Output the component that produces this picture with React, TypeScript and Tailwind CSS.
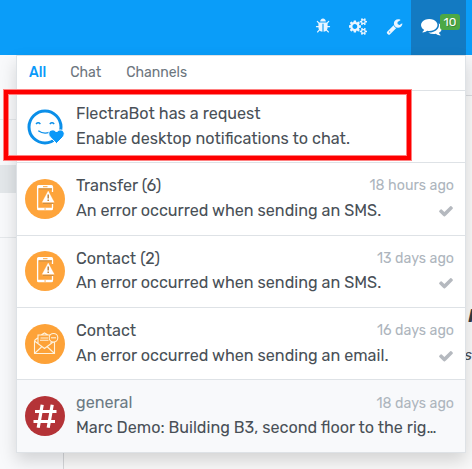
import type { ReactNode } from "react";

const gear =
  "v140q0 16-149 31-12 27-30 52 51 113 51 138 0 4-4 7-122 71-124 71-8 0-46-47t-52-68q-20 2-30 2t-30-2q-14 21-52 68t-46 47q-2 0-124-71-4-3-4-7 0-25 51-138-18-25-30-52-149-15-149-31v-140q0-16 149-31 13-29 30-52-51-113-51-138 0-4 4-7 4-2 35-20t59-34 30-16q8 0 46 46.500t52 67.500q20-2 30-2t30 2q51-71 92-112l6-2q4 0 124 70 4 3 4 7 0 25-51 138 17 23 30 52 149 15 149 31z";

const icons = {
  bug: "M1696 960q0 26-19 45t-45 19h-224q0 171-67 290l208 209q19 19 19 45t-19 45q-18 19-45 19t-45-19l-198-197q-5 5-15 13t-42 28.500-65 36.500-82 29-97 13v-896h-128v896q-51 0-101.500-13.500t-87-33-66-39-43.500-32.500l-15-14-183 207q-20 21-48 21-24 0-43-16-19-18-20.500-44.500t15.500-46.500l202-227q-58-114-58-274h-224q-26 0-45-19t-19-45 19-45 45-19h224v-294l-173-173q-19-19-19-45t19-45 45-19 45 19l173 173h844l173-173q19-19 45-19t45 19 19 45-19 45l-173 173v294h224q26 0 45 19t19 45zm-480-576h-640q0-133 93.500-226.500t226.500-93.500 226.500 93.500 93.500 226.500z",
  cogs:
    "M832 896q0-106-75-181t-181-75-181 75-75 181 75 181 181 75 181-75 75-181zm768 512q0-52-38-90t-90-38-90 38-38 90q0 53 37.500 90.500t90.500 37.500 90.500-37.500 37.500-90.500zm0-1024q0-52-38-90t-90-38-90 38-38 90q0 53 37.500 90.500t90.500 37.500 90.500-37.500 37.500-90.500zm-384 421v185q0 10-7 19.500t-16 10.500l-155 24q-11 35-32 76 34 48 90 115 7 11 7 20 0 12-7 19-23 30-82.500 89.500t-78.500 59.500q-11 0-21-7l-115-90q-37 19-77 31-11 108-23 155-7 24-30 24h-186q-11 0-20-7.500t-10-17.500l-23-153q-34-10-75-31l-118 89q-7 7-20 7-11 0-21-8-144-133-144-160 0-9 7-19 10-14 41-53t47-61q-23-44-35-82l-152-24q-10-1-17-9.500t-7-19.500v-185q0-10 7-19.500t16-10.500l155-24q11-35 32-76-34-48-90-115-7-11-7-20 0-12 7-20 22-30 82-89t79-59q11 0 21 7l115 90q34-18 77-32 11-108 23-154 7-24 30-24h186q11 0 20 7.500t10 17.500l23 153q34 10 75 31l118-89q8-7 20-7 11 0 21 8 144 133 144 160 0 8-7 19-12 16-42 54t-45 60q23 48 34 82l152 23q10 2 17 10.500t7 19.500zM1856 1338" +
    gear +
    "M1856 314" +
    gear,
  wrench: "M448 1472q0-26-19-45t-45-19-45 19-19 45 19 45 45 19 45-19 19-45zm644-420l-682 682q-37 37-90 37-52 0-91-37l-106-108q-38-36-38-90 0-53 38-91l681-681q39 98 114.500 173.500t173.500 114.500zm634-435q0 39-23 106-47 134-164.500 217.500t-258.500 83.500q-185 0-316.500-131.500t-131.500-316.500 131.500-316.500 316.500-131.500q58 0 121.500 16.500t107.500 46.500q16 11 16 28t-16 28l-293 169v224l193 107q5-3 79-48.500t135.500-81 70.500-35.500q15 0 23.500 10t8.500 25z",
  comments:
    "M1408 768q0 139-94 257t-256.500 186.500-353.500 68.500q-86 0-176-16-124 88-278 128-36 9-86 16h-3q-11 0-20.500-8t-11.500-21q-1-3-1-6.500t.5-6.500 2-6l2.500-5 3.500-5.500 4-5 4.500-5 4-4.500q5-6 23-25t26-29.500 22.500-29 25-38.500 20.500-44q-124-72-195-177t-71-224q0-139 94-257t256.500-186.500 353.500-68.500 353.500 68.500 256.500 186.500 94 257zm384 256q0 120-71 224.500t-195 176.500q10 24 20.500 44t25 38.500 22.500 29 26 29.500 23 25q1 1 4 4.500t4.500 5 4 5 3.500 5.500l2.500 5 2 6 .5 6.500-1 6.500q-3 14-13 22t-22 7q-50-7-86-16-154-40-278-128-90 16-176 16-271 0-472-132 58 4 88 4 161 0 309-45t264-129q125-92 192-212t67-254q0-77-23-152 129 71 204 178t75 230z",
  check: "M1671 566q0 40-28 68l-724 724-136 136q-28 28-68 28t-68-28l-136-136-362-362q-28-28-28-68t28-68l136-136q28-28 68-28t68 28l294 295 656-657q28-28 68-28t68 28l136 136q28 28 28 68z",
};

function Glyph({ name, className, wide = false }: { name: keyof typeof icons; className: string; wide?: boolean }) {
  return (
    <svg viewBox={wide ? "0 0 1920 1792" : "0 0 1792 1792"} className={"shrink-0 " + className} fill="currentColor">
      <path d={icons[name]} />
    </svg>
  );
}

function BotAvatar() {
  return (
    <svg viewBox="0 0 40 40" className="size-10" fill="none">
      <circle cx="20" cy="20" r="16" stroke="#0b8fe9" strokeWidth="3" />
      <path d="M11 17q2.200-2.400 4.400 0M24.800 17q2.200-2.400 4.400 0M13.300 23.800q5 3.600 11 1.600" stroke="#0b8fe9" strokeWidth="1.400" />
      <path d="M31.500 36.500 25.200 30c-4.500-5 2.300-10 6.300-5 4-5 10.500 0 6.500 5z" fill="#0b98f8" stroke="#fff" strokeWidth="1" />
    </svg>
  );
}

function SmsAvatar() {
  return (
    <svg viewBox="0 0 40 40" className="size-10" fill="none">
      <circle cx="20" cy="20" r="20" fill="#fea43b" />
      <path d="M12.600 8v21M27.500 8v5M27.500 25v4" stroke="#fff" strokeWidth="1.300" />
      <path d="M12 9.200V7.500Q12 6 13.500 6h13Q28 6 28 7.500v1.700zM12 28.800h16V30q0 1.300-1.500 1.300h-13Q12 31.300 12 30z" fill="#fff" />
      <path d="M18 7.700h4.500M19.300 30h1.600" stroke="#fea43b" strokeWidth="1" />
      <path d="M18 24.400h10.500M14 9.900h13" stroke="#b98847" strokeWidth=".8" />
      <path d="m23.200 12 6 11.300H17.200z" fill="#fff" stroke="#fff" strokeWidth=".3" strokeLinejoin="round" />
      <path d="M23.200 15.500v4M23.200 20.600v1.500" stroke="#b97b32" strokeWidth="1.400" />
    </svg>
  );
}

function MailAvatar() {
  return (
    <svg viewBox="0 0 40 40" className="size-10" fill="none" stroke="#fff2dc" strokeWidth="1.100">
      <circle cx="20" cy="20" r="20" fill="#fda238" stroke="none" />
      <path d="M9.500 16.500v13h20v-13M9.500 17l10 7.500 10-7.500M10 29l6.500-6M29 29l-6.500-6M9.500 16.500l3-2.500M13 19v-8h12M26 19v-1M16 11l3.500-2 3.500 2M15.500 14H23M15 16.200h8.500" />
      <circle cx="28.500" cy="13.800" r="4.300" fill="#fda238" />
      <path d="M26 13.800h5" />
    </svg>
  );
}

function HashAvatar() {
  return (
    <svg viewBox="0 0 40 40" className="size-10">
      <circle cx="20" cy="20" r="20" fill="#b43337" />
      <path d="m17.200 8.700-4 23M27.200 8.700l-4 23M10 15.500h21.500M8.500 25.500H30" stroke="#fff" strokeWidth="3.200" fill="none" />
    </svg>
  );
}

type Item = {
  avatar: ReactNode;
  title: string;
  body: string;
  time?: string;
  check?: boolean;
  muted?: boolean;
};

const items: Item[] = [
  { avatar: <BotAvatar />, title: "FlectraBot has a request", body: "Enable desktop notifications to chat." },
  { avatar: <SmsAvatar />, title: "Transfer (6)", body: "An error occurred when sending an SMS.", time: "18 hours ago", check: true },
  { avatar: <SmsAvatar />, title: "Contact (2)", body: "An error occurred when sending an SMS.", time: "13 days ago", check: true },
  { avatar: <MailAvatar />, title: "Contact", body: "An error occurred when sending an email.", time: "16 days ago", check: true },
  { avatar: <HashAvatar />, title: "general", body: "Marc Demo: Building B3, second floor to the rig…", time: "18 days ago", muted: true },
];

function Row({ item }: { item: Item }) {
  return (
    <div className={"flex h-[72.300px] items-center border-t border-[#dee2e6] pr-[11px] pl-2 " + (item.muted ? "bg-[#f8f9fb]" : "")}>
      {item.avatar}
      <div className="ml-[11px] min-w-0 flex-1 pb-[0.400px] text-[16.170px]">
        <div className="flex h-[24.500px] items-center justify-between">
          <span className={"whitespace-nowrap " + (item.muted ? "text-[#6c7a84]" : "")}>{item.title}</span>
          <span className={"text-[14.200px] text-[#adb5bd] " + (item.muted ? "" : "pb-px")}>{item.time}</span>
        </div>
        <div className="flex h-[24.500px] items-center justify-between">
          <span className="whitespace-nowrap">{item.body}</span>
          {item.check && <Glyph name="check" className="size-4 text-[#b5b9bf]" />}
        </div>
      </div>
    </div>
  );
}

export default function App() {
  return (
    <div className="relative flex h-[469px] w-[472px] flex-col overflow-hidden bg-[#f9f9f9] font-[Rubik,Roboto,sans-serif] text-base text-[#495057]">
      <header className="flex h-[55px] shrink-0 justify-end bg-[#0a9df9] pr-[6px] text-[#eaf5ff]">
        <div className="flex items-center pr-[8px] pb-[3px]">
          <Glyph name="bug" className="mr-[18px] size-[16px]" />
          <Glyph name="cogs" wide className="mr-[18px] h-[17px] w-[19px]" />
          <Glyph name="wrench" className="size-[17px]" />
        </div>
        <div className="relative flex w-[55px] items-center bg-[#137ac2] pb-[2px] pl-[10px] text-white">
          <Glyph name="comments" className="size-[21px]" />
          <span className="absolute top-[14px] left-[29px] flex h-4 w-5 items-center justify-center rounded-[3px] bg-[#4ca845] pb-px text-xs leading-none [text-shadow:1px_1px_0_rgba(0,0,0,0.200)]">10</span>
        </div>
      </header>

      <div className="flex flex-1">
        <aside className="w-16 border-r border-[#d5d7da] bg-[#f8f9fb]">
          <div className="h-[65px] border-b border-[#e5e8eb]" />
          <div className="h-[45px]" />
          <div className="h-7 bg-[#e3e7ea]" />
          <div className="h-[45px] border-b border-[#e5e8eb]" />
        </aside>
        <main className="flex-1">
          <div className="h-[41px] border-b border-[#d9dbdf] bg-[#f5f6f8]" />
          <div className="mt-[210px] flex h-5 items-center justify-end text-lg font-bold text-[#343a40] italic">
            <span className="-mr-0.5">I</span>
          </div>
          <div className="mt-[19px] flex h-5 items-center justify-end text-[15px] text-[#495057] italic">s</div>
        </main>
      </div>

      <section className="absolute top-[55px] left-4 w-[450px] border border-[#dee2e6] bg-white shadow-[0_8px_16px_rgba(0,0,0,0.150)]">
        <nav className="flex h-[34.100px] items-center gap-6 pl-3 text-sm text-[#6c757d]">
          <span className="font-medium text-[#0a9af9]">All</span>
          <span>Chat</span>
          <span className="ml-px">Channels</span>
        </nav>
        {items.map((item, i) => (
          <Row key={i} item={item} />
        ))}
      </section>

      <div className="pointer-events-none absolute top-[90px] left-1 h-[70px] w-[407px] border-4 border-[#fe0000] shadow-[0_0_0_1px_#ff8080,inset_0_0_0_1px_#ff8080]" />
    </div>
  );
}
